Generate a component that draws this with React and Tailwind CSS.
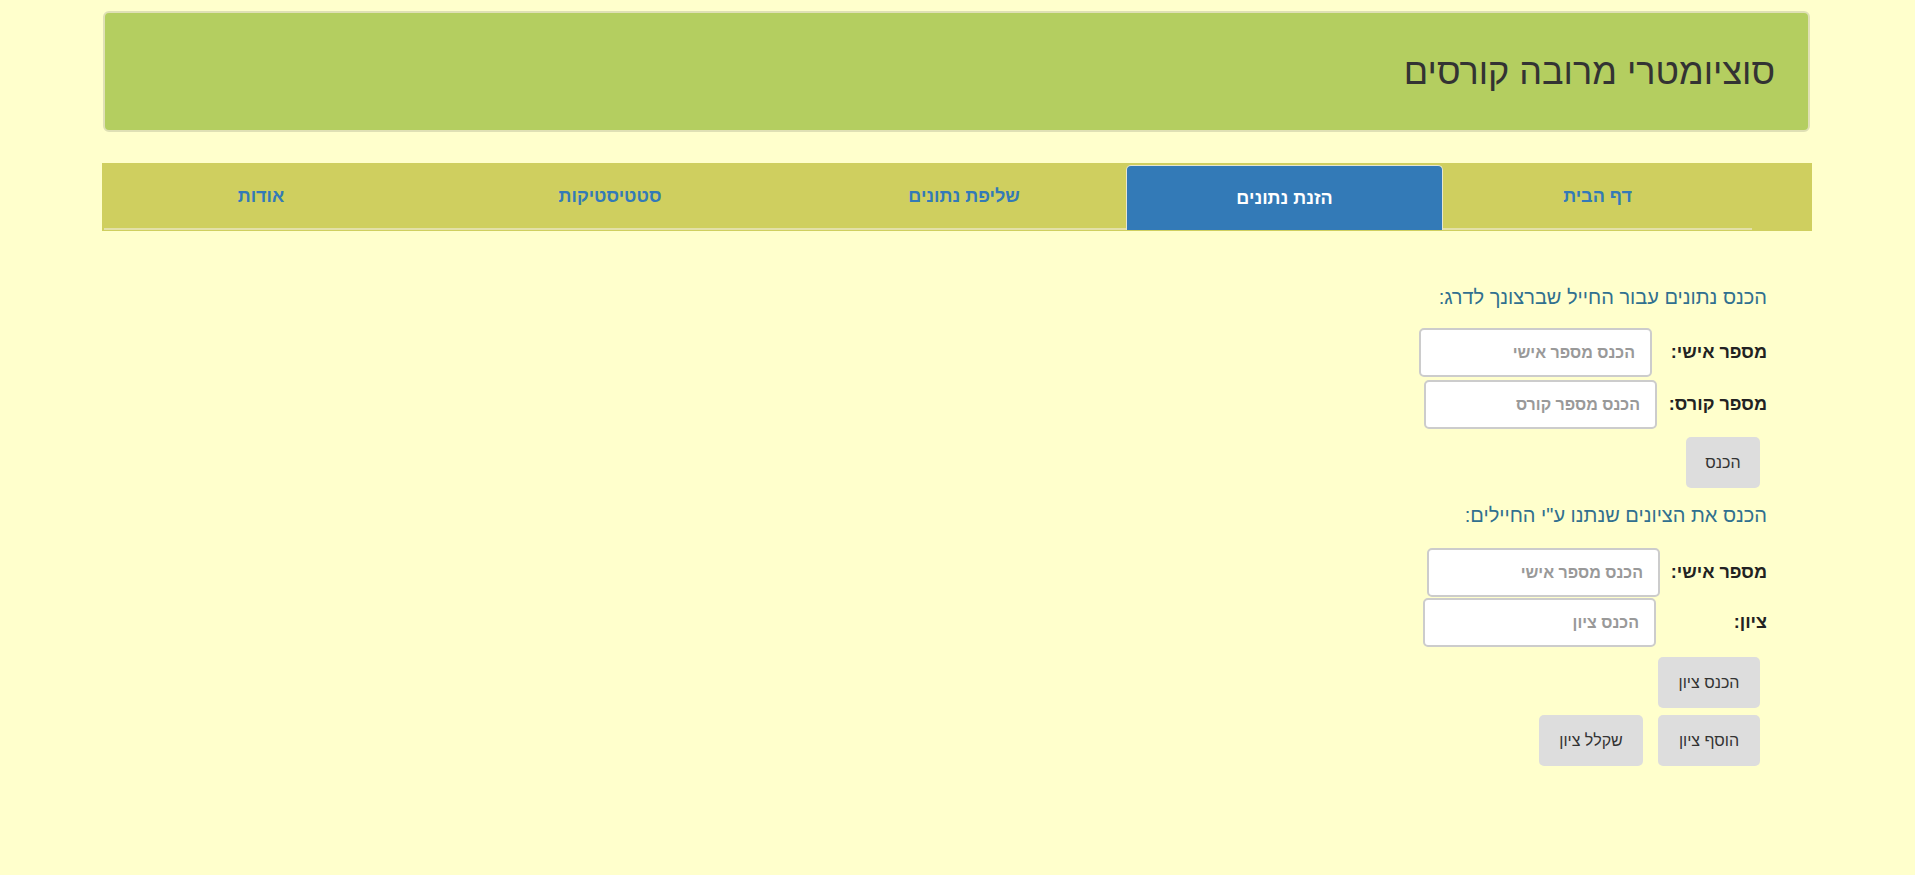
const tabs = [
  { label: "דף הבית", w: "w-[309px]" },
  { label: "הזנת נתונים", w: "w-[317px]", active: true },
  { label: "שליפת נתונים", w: "w-[324px]" },
  { label: "סטטיסטיקות", w: "w-[384px]" },
  { label: "אודות", w: "w-[314px]" },
];

function Field({ label, placeholder, labelW, className = "" }) {
  return (
    <div className={`flex items-center ${className}`}>
      <label className={`${labelW} text-[18px] font-bold text-[#222]`}>{label}</label>
      <input
        placeholder={placeholder}
        className="h-[49px] w-[233px] rounded-[5px] border-2 border-[#cccccc] bg-white px-[15px] text-[16px] font-bold outline-none placeholder:font-bold placeholder:text-[#999]"
      />
    </div>
  );
}

function Btn({ children, w }) {
  return (
    <button className={`h-[51px] ${w} rounded-[5px] bg-[#dddddd] text-[16px] text-[#333]`}>
      {children}
    </button>
  );
}

export default function App() {
  return (
    <div
      dir="rtl"
      className="min-h-screen bg-[#ffffcc]"
      style={{ fontFamily: '"Liberation Sans", "DejaVu Sans", sans-serif' }}
    >
      <div className="ml-[102px] mr-auto w-[1710px] pt-[11px] pb-[40px]">
        {/* header */}
        <div className="ml-[1px] mr-[2px] flex h-[121px] items-center rounded-[6px] border-2 border-[#dfe0b5] bg-[#b4ce60] pr-[33px]">
          <h1 className="text-[36px] leading-none text-[#333]">סוציומטרי מרובה קורסים</h1>
        </div>

        {/* nav */}
        <div className="mt-[31px] h-[68px] bg-[#cfcf5f] pt-[2px]">
          <ul className="mr-[60px] flex">
            {tabs.map((t) =>
              t.active ? (
                <li
                  key={t.label}
                  className={`${t.w} flex h-[65px] items-center justify-center rounded-t-[5px] border border-b-0 border-[#e6e6d0] bg-[#337ab7] text-[18px] font-bold text-white`}
                >
                  {t.label}
                </li>
              ) : (
                <li
                  key={t.label}
                  className={`${t.w} flex h-[65px] items-center justify-center border-b-2 border-[#e3e0a8] text-[18px] font-bold text-[#337ab7]`}
                >
                  {t.label}
                </li>
              )
            )}
          </ul>
        </div>

        {/* form */}
        <div className="flex flex-col items-start pr-[45px]">
          <h4 className="mt-[52px] text-[20px] leading-[28px] text-[#31708f]">
            הכנס נתונים עבור החייל שברצונך לדרג:
          </h4>
          <Field className="mt-[17px]" label="מספר אישי:" placeholder="הכנס מספר אישי" labelW="w-[115px]" />
          <Field className="mt-[3px]" label="מספר קורס:" placeholder="הכנס מספר קורס" labelW="w-[110px]" />
          <div className="mt-[8px] mr-[7px]">
            <Btn w="w-[74px]">הכנס</Btn>
          </div>

          <h4 className="mt-[13px] text-[20px] leading-[28px] text-[#31708f]">
            הכנס את הציונים שנתנו ע"י החיילים:
          </h4>
          <Field className="mt-[19px]" label="מספר אישי:" placeholder="הכנס מספר אישי" labelW="w-[107px]" />
          <Field className="mt-[1px]" label="ציון:" placeholder="הכנס ציון" labelW="w-[111px]" />
          <div className="mt-[10px] mr-[7px]">
            <Btn w="w-[102px]">הכנס ציון</Btn>
          </div>
          <div className="mt-[7px] mr-[7px] flex gap-[15px]">
            <Btn w="w-[102px]">הוסף ציון</Btn>
            <Btn w="w-[104px]">שקלל ציון</Btn>
          </div>
        </div>
      </div>
    </div>
  );
}
